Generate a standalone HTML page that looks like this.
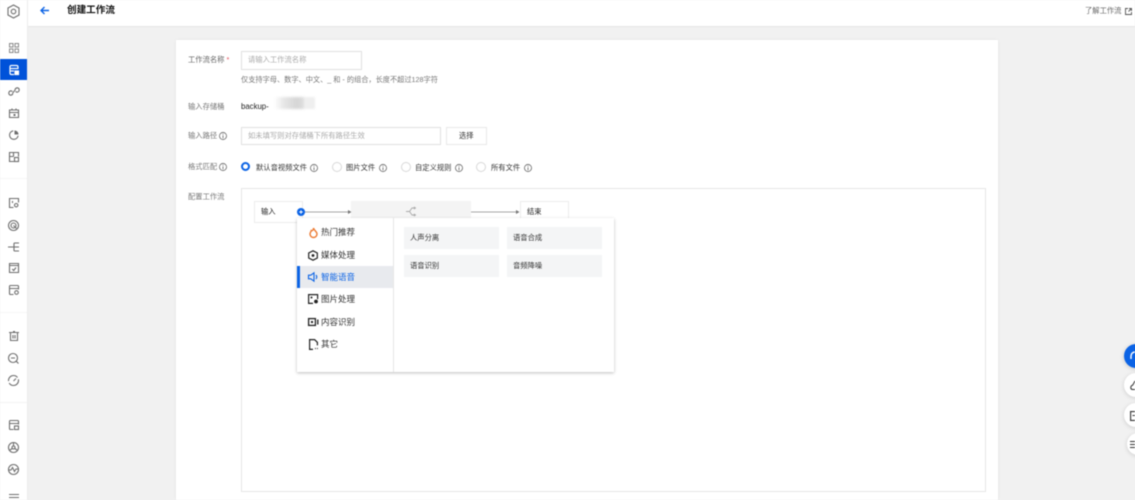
<!DOCTYPE html>
<html lang="zh">
<head>
<meta charset="utf-8">
<title>创建工作流</title>
<style>
html,body{margin:0;padding:0;width:1135px;height:500px;overflow:hidden;background:#f1f1f1}
body{position:relative;font-family:"Liberation Sans","Noto Sans CJK SC",sans-serif;color:#555}
.a{position:absolute}
.t{position:absolute;white-space:nowrap;line-height:12px;font-size:7.300px}
#root{position:absolute;left:0;top:0;width:1135px;height:500px;filter:blur(.45px)}
svg{position:absolute;overflow:visible;fill:none}
.si{stroke:#6e6e6e;stroke-width:1.100}
.info{width:8px;height:8px}
.radio{position:absolute;width:8px;height:8px;border:1px solid #d8d8d8;border-radius:50%;background:#fff}
.card{position:absolute;width:95px;height:22px;background:#f4f5f6}
</style>
</head>
<body>
<div id="root">
  <!-- sidebar -->
  <div class="a" style="left:0;top:0;width:27px;height:500px;background:#fff;border-right:1px solid #ececec"></div>
  <div class="a" style="left:0;top:178px;width:27px;height:1px;background:#f6f6f6"></div>
  <div class="a" style="left:0;top:312px;width:27px;height:1px;background:#f6f6f6"></div>
  <div class="a" style="left:0;top:402px;width:27px;height:1px;background:#f3f3f3"></div>
  <div class="a" style="left:0;top:59px;width:27px;height:21px;background:#0052d9"></div>

  <!-- topbar -->
  <div class="a" style="left:28px;top:0;width:1107px;height:26px;background:#fff;border-bottom:1px solid #e6e6e6"></div>

  <!-- sidebar icons -->
  <svg style="left:7px;top:4px" width="13" height="15" viewBox="0 0 13 15" class="si"><path d="M6.500 1 12 4v7l-5.500 3L1 11V4z"/><circle cx="6.500" cy="7.500" r="2.300"/></svg>
  <svg style="left:9px;top:43px" width="10" height="10" viewBox="0 0 10 10" fill="#8a8a8a"><rect x="0.500" y="0.500" width="3.500" height="3.500" stroke="#8a8a8a"/><rect x="6" y="0.500" width="3.500" height="3.500" stroke="#8a8a8a"/><rect x="0.500" y="6" width="3.500" height="3.500" stroke="#8a8a8a"/><rect x="6" y="6" width="3.500" height="3.500" stroke="#8a8a8a"/></svg>
  <svg style="left:9px;top:65px" width="10" height="10" viewBox="0 0 10 10" stroke="#fff" stroke-width="1.200"><path d="M1 6.500V2q0-1.500 1.500-1.500h5Q9 .5 9 2v2M1 3.500h8M1 6h4M1 6.500V8q0 1.500 1.500 1.500H5"/><rect x="6" y="6" width="3.500" height="3.500" fill="#fff"/></svg>
  <svg style="left:8px;top:87px" width="12" height="9" viewBox="0 0 12 9" class="si"><path d="M4.500 4.500 3 3.800Q1 4 .8 6q0 2 2 2.200Q4.500 8 4.800 6.500M7 2.800Q7.300 1 9.200.8q2 .2 2 2.200-.2 2-2.200 2.200L7.500 4.500M4.500 6.300 7.300 2.700"/></svg>
  <svg style="left:9px;top:108px" width="10" height="10" viewBox="0 0 10 10" class="si"><path d="M.5 2h9v7.500h-9zM.5 4.500h9M3 .5v2M7 .5v2"/><rect x="4.500" y="6" width="2" height="2" fill="#6e6e6e" stroke="none"/></svg>
  <svg style="left:9px;top:130px" width="10" height="10" viewBox="0 0 10 10" class="si"><path d="M4.200.8a4.300 4.300 0 1 0 4.900 4.900"/><path d="M5.500.5v4h4a4 4 0 0 0-4-4z" fill="#6e6e6e" stroke="none"/></svg>
  <svg style="left:9px;top:152px" width="10" height="10" viewBox="0 0 10 10" class="si"><path d="M5 9.500H.5V.5h9v4M.5 4.500h4M4.500.5v4"/><rect x="5.500" y="5.500" width="4" height="4"/></svg>
  <svg style="left:9px;top:198px" width="10" height="10" viewBox="0 0 10 10" class="si"><path d="M4.500 9.500h-4V.5h9v4M3.500 3v2"/><circle cx="7.200" cy="7.200" r="1.700"/></svg>
  <svg style="left:8px;top:220px" width="11" height="11" viewBox="0 0 11 11" class="si"><circle cx="5.500" cy="5.500" r="5"/><circle cx="5.500" cy="5.500" r="2.500"/><path d="M5.500 5.500l3 3"/></svg>
  <svg style="left:8px;top:242px" width="12" height="10" viewBox="0 0 12 10" class="si"><path d="M0 5h6M6 1v8M6 1h5M6 5h5M6 9h5"/></svg>
  <svg style="left:9px;top:263px" width="10" height="10" viewBox="0 0 10 10" class="si"><path d="M.5.500h9v9h-9zM.5 2.500h9M3.200 6l1.500 1.500L7 4.500"/></svg>
  <svg style="left:9px;top:285px" width="10" height="10" viewBox="0 0 10 10" class="si"><path d="M4.500 9.500h-3q-1 0-1-1V1.500q0-1 1-1h7q1 0 1 1v3M.5 3.500h9"/><circle cx="7.500" cy="7.500" r="1.800"/></svg>
  <svg style="left:9px;top:331px" width="10" height="10" viewBox="0 0 10 10" class="si"><path d="M0 1.500h10M1.500 1.500v8h7v-8M4 .5h2M4 4v3.500M6 4v3.500"/></svg>
  <svg style="left:8px;top:353px" width="11" height="11" viewBox="0 0 11 11" class="si"><circle cx="5" cy="5" r="4.500"/><path d="M8.300 8.300l2.200 2.200M3 5h4"/></svg>
  <svg style="left:8px;top:375px" width="11" height="11" viewBox="0 0 11 11" class="si"><circle cx="5.500" cy="5.500" r="5" stroke-dasharray="13 2"/><path d="M5.500 6 8 3.500"/></svg>
  <svg style="left:9px;top:420px" width="10" height="10" viewBox="0 0 10 10" class="si"><path d="M4.500 9.500h-3q-1 0-1-1V1.500q0-1 1-1h7q1 0 1 1v3M.5 3.500h9"/><rect x="5.500" y="6" width="4" height="3.500"/></svg>
  <svg style="left:8px;top:442px" width="11" height="11" viewBox="0 0 11 11" class="si"><circle cx="5.500" cy="5.500" r="5"/><circle cx="5.500" cy="5.500" r="1.500"/><path d="M5.500 1v3M2 8l2.200-1.500M9 8 6.800 6.500"/></svg>
  <svg style="left:8px;top:464px" width="11" height="11" viewBox="0 0 11 11" class="si"><circle cx="5.500" cy="5.500" r="5"/><path d="M1 6h2l1.500-2.500L6.500 7.500 8 5h2.500"/></svg>
  <svg style="left:9px;top:494px" width="10" height="6" viewBox="0 0 10 6" class="si"><path d="M0 .5h10M0 3.500h10"/></svg>

  <!-- top bar content -->
  <svg style="left:40px;top:6px" width="9" height="9" viewBox="0 0 9 9" stroke="#0b63e5" stroke-width="1.400"><path d="M9 4.500H1M4.500 1 1 4.500 4.500 8"/></svg>
  <div class="t" style="left:67px;top:5px;font-size:9.600px;font-weight:bold;color:#111">创建工作流</div>
  <div class="t" style="left:1085px;top:5px;color:#666;font-size:7.300px">了解工作流</div>
  <svg style="left:1125px;top:8px" width="7" height="7" viewBox="0 0 7 7" stroke="#555" stroke-width=".9"><path d="M3 .5H.5v6h6V4M3.500 3.500l3-3M4 .5h2.500V3"/></svg>

  <!-- card -->
  <div class="a" style="left:176px;top:40px;width:822px;height:460px;background:#fff;box-shadow:0 0 3px rgba(0,0,0,.06)"></div>

  <!-- form row 1 -->
  <div class="t" style="left:188px;top:54px;color:#666">工作流名称 <span style="color:#e34d59">*</span></div>
  <div class="a" style="left:241px;top:51px;width:119px;height:17px;border:1px solid #e0e0e0"></div>
  <div class="t" style="left:248px;top:54px;color:#aaa">请输入工作流名称</div>
  <div class="t" style="left:241px;top:74px;color:#777;font-size:7.200px">仅支持字母、数字、中文、_ 和 - 的组合，长度不超过128字符</div>

  <!-- row 2 -->
  <div class="t" style="left:188px;top:101px;color:#777">输入存储桶</div>
  <div class="t" style="left:241px;top:101px;color:#222;font-size:7.800px">backup-</div>
  <div class="a" style="left:274px;top:97px;width:41px;height:12px;background:linear-gradient(90deg,#fff 0,#e6e6e6 25%,#d6d6d6 55%,#dcdcdc 70%,#efefef 75%,#efefef 100%);filter:blur(1px)"></div>

  <!-- row 3 -->
  <div class="t" style="left:188px;top:130px;color:#777">输入路径</div>
  <svg class="info" style="left:219px;top:132px" viewBox="0 0 7 7" stroke="#666" stroke-width=".7"><circle cx="3.500" cy="3.500" r="3.100"/><path d="M3.500 3v2.500M3.500 1.500v.8"/></svg>
  <div class="a" style="left:241px;top:127px;width:198px;height:16px;border:1px solid #e0e0e0"></div>
  <div class="t" style="left:248px;top:130px;color:#aaa">如未填写则对存储桶下所有路径生效</div>
  <div class="a" style="left:446px;top:127px;width:39px;height:16px;border:1px solid #e8e8e8"></div>
  <div class="t" style="left:459px;top:130px;color:#333">选择</div>

  <!-- row 4 -->
  <div class="t" style="left:188px;top:161px;color:#777">格式匹配</div>
  <svg class="info" style="left:219px;top:163px" viewBox="0 0 7 7" stroke="#666" stroke-width=".7"><circle cx="3.500" cy="3.500" r="3.100"/><path d="M3.500 3v2.500M3.500 1.500v.8"/></svg>
  <div class="a" style="left:241px;top:162px;width:5px;height:5px;border:2.500px solid #0b63e5;border-radius:50%;background:#fff"></div>
  <div class="t" style="left:256px;top:162px;color:#333">默认音视频文件</div>
  <svg class="info" style="left:310px;top:164px" viewBox="0 0 7 7" stroke="#666" stroke-width=".7"><circle cx="3.500" cy="3.500" r="3.100"/><path d="M3.500 3v2.500M3.500 1.500v.8"/></svg>
  <div class="radio" style="left:332px;top:162px"></div>
  <div class="t" style="left:346px;top:162px;color:#333">图片文件</div>
  <svg class="info" style="left:379px;top:164px" viewBox="0 0 7 7" stroke="#666" stroke-width=".7"><circle cx="3.500" cy="3.500" r="3.100"/><path d="M3.500 3v2.500M3.500 1.500v.8"/></svg>
  <div class="radio" style="left:401px;top:162px"></div>
  <div class="t" style="left:415px;top:162px;color:#333">自定义规则</div>
  <svg class="info" style="left:455px;top:164px" viewBox="0 0 7 7" stroke="#666" stroke-width=".7"><circle cx="3.500" cy="3.500" r="3.100"/><path d="M3.500 3v2.500M3.500 1.500v.8"/></svg>
  <div class="radio" style="left:476px;top:162px"></div>
  <div class="t" style="left:491px;top:162px;color:#333">所有文件</div>
  <svg class="info" style="left:524px;top:164px" viewBox="0 0 7 7" stroke="#666" stroke-width=".7"><circle cx="3.500" cy="3.500" r="3.100"/><path d="M3.500 3v2.500M3.500 1.500v.8"/></svg>

  <!-- row 5 -->
  <div class="t" style="left:188px;top:191px;color:#777">配置工作流</div>
  <div class="a" style="left:241px;top:188px;width:743px;height:302px;border:1px solid #e6e6e6;background:#fff"></div>

  <!-- flow -->
  <div class="a" style="left:254px;top:201px;width:47px;height:20px;border:1px solid #ededed"></div>
  <div class="t" style="left:261px;top:206px;color:#222">输入</div>
  <div class="a" style="left:351px;top:201px;width:120px;height:18px;background:#f4f4f4"></div>
  <svg style="left:406px;top:206px" width="11" height="11" viewBox="0 0 11 11" stroke="#aaa" stroke-width=".9"><path d="M0 5.500h3.500L6 2h3.500M3.500 5.500 6 9h3.500M8 .8l1.500 1.200L8 3.200M8 7.800 9.500 9 8 10.200"/></svg>
  <svg style="left:304px;top:208px" width="48" height="8" viewBox="0 0 48 8"><path d="M0 4h45" stroke="#888" stroke-width=".8"/><path d="M44 2l3.500 2-3.500 2z" fill="#777"/></svg>
  <svg style="left:471px;top:208px" width="50" height="8" viewBox="0 0 50 8"><path d="M0 4h46" stroke="#888" stroke-width=".8"/><path d="M45 2l3.500 2-3.500 2z" fill="#777"/></svg>
  <div class="a" style="left:520px;top:201px;width:47px;height:20px;border:1px solid #ededed"></div>
  <div class="t" style="left:527px;top:206px;color:#222">结束</div>
  <svg style="left:297px;top:208px" width="8" height="8" viewBox="0 0 8 8"><circle cx="4" cy="4" r="4" fill="#0b63e5"/><path d="M2.200 4h3.600M4 2.200v3.600" stroke="#fff" stroke-width="1"/></svg>

  <!-- menu -->
  <div class="a" style="left:297px;top:218px;width:317px;height:154px;background:#fff;box-shadow:0 1px 3px rgba(0,0,0,.26)"></div>
  <div class="a" style="left:393px;top:218px;width:1px;height:154px;background:#e6e6e6"></div>
  <div class="a" style="left:297px;top:266px;width:96px;height:22px;background:#e8eaee"></div>
  <div class="a" style="left:297px;top:266px;width:3px;height:22px;background:#0b63e5"></div>

  <svg style="left:309px;top:227px" width="9" height="11" viewBox="0 0 9 11" stroke="#ec7a32" stroke-width="1.400"><path d="M4.500 1C5 3.500 8 4.500 8 7a3.500 3.500 0 0 1-7 0c0-1.500 1-2.200 1.300-3.500C3.500 4 4.500 3 4.500 1z"/></svg>
  <div class="t" style="left:321px;top:226px;font-size:8.500px;color:#333">热门推荐</div>
  <svg style="left:308px;top:250px" width="10" height="11" viewBox="0 0 10 11" stroke="#222" stroke-width="1.200"><path d="M5 .8 9.300 3v5L5 10.200.7 8V3z"/><circle cx="5" cy="5.500" r="1.400" fill="#222" stroke="none"/></svg>
  <div class="t" style="left:321px;top:249px;font-size:8.500px;color:#333">媒体处理</div>
  <svg style="left:308px;top:272px" width="11" height="10" viewBox="0 0 11 10" stroke="#0b63e5" stroke-width="1.100"><path d="M.5 3.200h2.300L6 .8v8.400L2.800 6.800H.5zM8 3q1.500 2 0 4"/></svg>
  <div class="t" style="left:321px;top:271px;font-size:8.500px;color:#0b63e5">智能语音</div>
  <svg style="left:308px;top:294px" width="11" height="10" viewBox="0 0 11 10" stroke="#222" stroke-width="1.200"><path d="M5 9.400H.6V.6h9v4.500"/><circle cx="3.500" cy="3.500" r="1" fill="#222" stroke="none"/><circle cx="8" cy="7.500" r="1.900" fill="#222" stroke="none"/></svg>
  <div class="t" style="left:321px;top:293px;font-size:8.500px;color:#333">图片处理</div>
  <svg style="left:308px;top:317px" width="11" height="10" viewBox="0 0 11 10" stroke="#222" stroke-width="1.300"><rect x=".6" y="1.600" width="6.800" height="6.800"/><path d="M9.800 2.500v5"/><rect x="3" y="4" width="2" height="2" fill="#222" stroke="none"/></svg>
  <div class="t" style="left:321px;top:316px;font-size:8.500px;color:#333">内容识别</div>
  <svg style="left:309px;top:339px" width="9" height="11" viewBox="0 0 9 11" stroke="#222" stroke-width="1.200"><path d="M4 10.400H.6V.6h5l2.800 2.800v3"/><path d="M6 9.500h.8M8 9.500h.8" stroke-width="1.300"/></svg>
  <div class="t" style="left:321px;top:338px;font-size:8.500px;color:#333">其它</div>

  <div class="card" style="left:404px;top:227px"></div>
  <div class="card" style="left:507px;top:227px;width:95px"></div>
  <div class="card" style="left:404px;top:255px"></div>
  <div class="card" style="left:507px;top:255px;width:95px"></div>
  <div class="t" style="left:410px;top:232px;color:#333">人声分离</div>
  <div class="t" style="left:513px;top:232px;color:#333">语音合成</div>
  <div class="t" style="left:410px;top:260px;color:#333">语音识别</div>
  <div class="t" style="left:513px;top:260px;color:#333">音频降噪</div>

  <!-- floating buttons -->
  <div class="a" style="left:1124px;top:344px;width:24px;height:24px;border-radius:50%;background:#0b63e5;box-shadow:0 1px 5px rgba(0,0,0,.18)"></div>
  <svg style="left:1130px;top:351px" width="5" height="9" viewBox="0 0 5 9" stroke="#fff" stroke-width="1.400"><path d="M1 8V5a4 4 0 0 1 4-4"/></svg>
  <div class="a" style="left:1124px;top:373px;width:24px;height:24px;border-radius:50%;background:#fff;box-shadow:0 1px 5px rgba(0,0,0,.15)"></div>
  <svg style="left:1130px;top:380px" width="5" height="11" viewBox="0 0 5 11" stroke="#333" stroke-width="1"><path d="M5 1 2.800 5Q.5 6 .8 8q.2 1.500 2 1.500H5"/></svg>
  <div class="a" style="left:1124px;top:403px;width:24px;height:24px;border-radius:50%;background:#fff;box-shadow:0 1px 5px rgba(0,0,0,.15)"></div>
  <svg style="left:1130px;top:411px" width="5" height="10" viewBox="0 0 5 10" stroke="#333" stroke-width="1.100"><path d="M5 .6H.6v8.800H5M2.500 4.500H5"/></svg>
  <div class="a" style="left:1127px;top:433px;width:22px;height:22px;border-radius:50%;background:#fff;box-shadow:0 1px 5px rgba(0,0,0,.15)"></div>
  <svg style="left:1130px;top:440px" width="5" height="9" viewBox="0 0 5 9" stroke="#333" stroke-width="1"><path d="M0 1.500h5M0 4.500h5M0 7.500h5"/></svg>
</div>
</body>
</html>
